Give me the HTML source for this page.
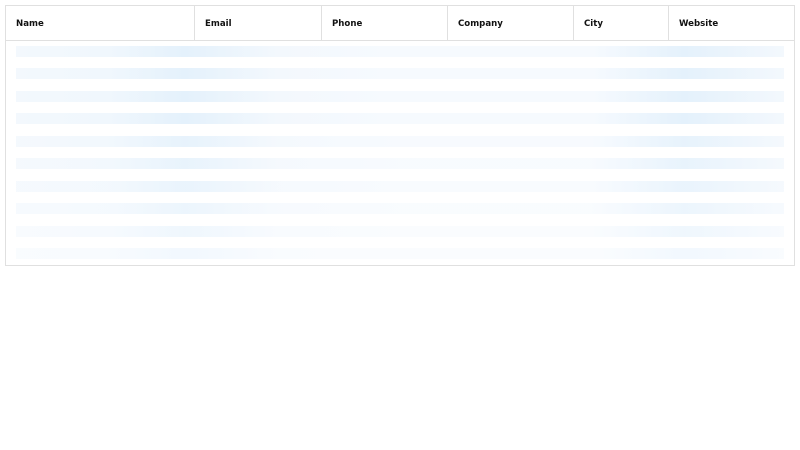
<!DOCTYPE html>
<html><head><style>
body{margin:0;background:#fff;font-family:"DejaVu Sans","Liberation Sans",sans-serif;}
.t{position:absolute;left:5px;top:5px;width:788px;height:259px;border:1px solid #e0e0e0;}
.h{position:absolute;top:0;left:0;right:0;height:34px;border-bottom:1px solid #e0e0e0;}
.c{position:absolute;top:0;height:34px;line-height:35px;padding-top:1px;font-size:8.6px;font-weight:bold;color:#111;padding-left:10px;box-sizing:border-box;border-right:1px solid #e0e0e0;}
.b{position:absolute;left:10px;width:768px;height:11px;background:linear-gradient(90deg,#f3f8fd 0%,#f0f7fd 12%,#e4f1fc 22%,#f3f8fd 34%,#f6fafe 50%,#f6fafe 75%,#e4f1fc 87%,#f3f8fd 100%);}
</style></head><body>
<div class="t">
<div class="h">
<div class="c" style="left:0;width:189px">Name</div>
<div class="c" style="left:189px;width:127px">Email</div>
<div class="c" style="left:316px;width:126px">Phone</div>
<div class="c" style="left:442px;width:126px">Company</div>
<div class="c" style="left:568px;width:95px">City</div>
<div class="c" style="left:663px;width:125px;border-right:none">Website</div>
</div>
<div class="b" style="top:40px"></div>
<div class="b" style="top:62px"></div>
<div class="b" style="top:85px"></div>
<div class="b" style="top:107px"></div>
<div class="b" style="top:130px;opacity:.9"></div>
<div class="b" style="top:152px;opacity:.85"></div>
<div class="b" style="top:175px;opacity:.8"></div>
<div class="b" style="top:197px;opacity:.7"></div>
<div class="b" style="top:220px;opacity:.6"></div>
<div class="b" style="top:242px;opacity:.5"></div>
</div>
</body></html>
